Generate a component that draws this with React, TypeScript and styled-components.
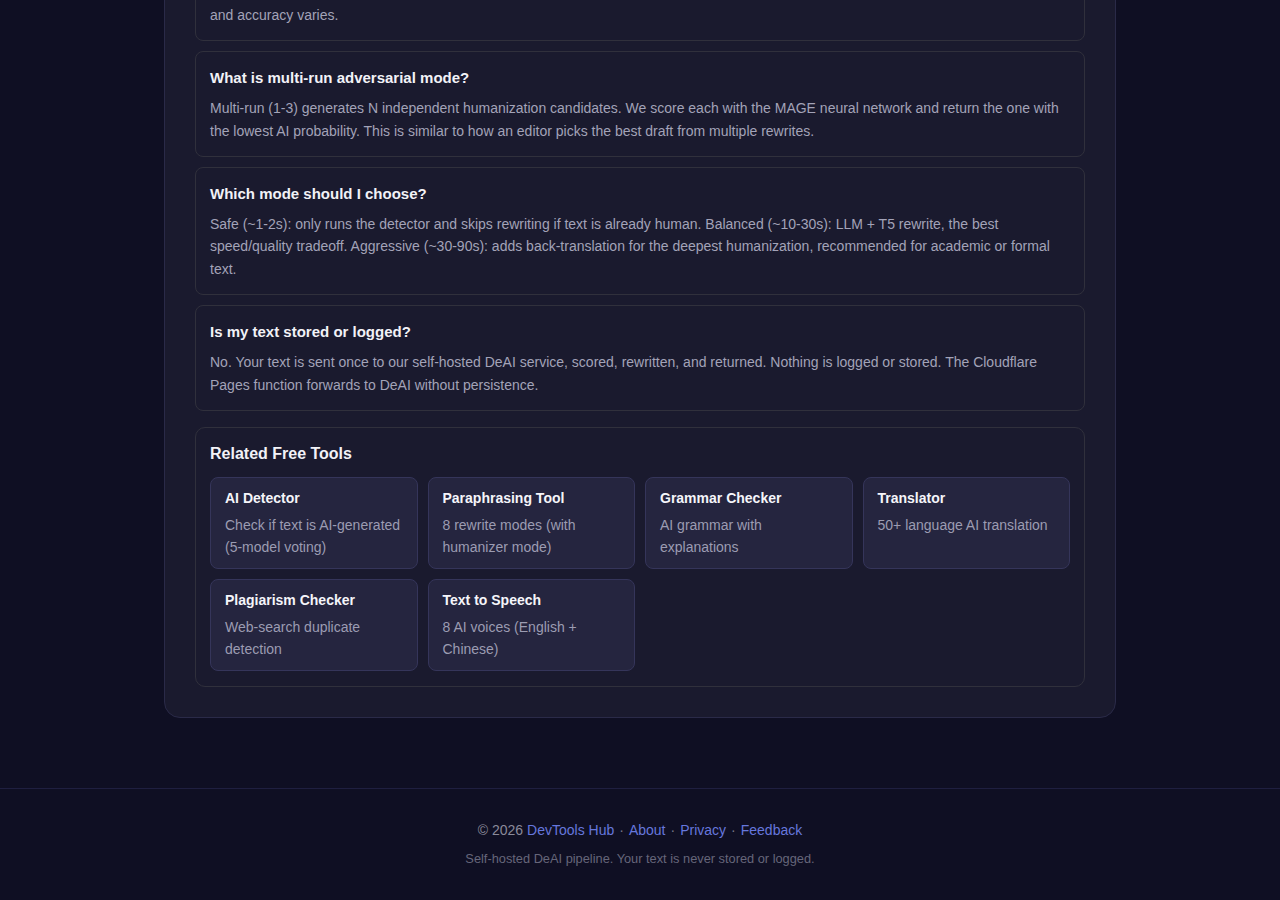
import React from 'react';
import styled, { createGlobalStyle } from 'styled-components';

const faqs = [
  {
    q: 'How accurate is the humanizer?',
    a: 'Results depend on the input length, style and which detector is used to check the output. No tool can guarantee a pass on every detector, and accuracy varies.',
  },
  {
    q: 'What is multi-run adversarial mode?',
    a: 'Multi-run (1-3) generates N independent humanization candidates. We score each with the MAGE neural network and return the one with the lowest AI probability. This is similar to how an editor picks the best draft from multiple rewrites.',
  },
  {
    q: 'Which mode should I choose?',
    a: 'Safe (~1-2s): only runs the detector and skips rewriting if text is already human. Balanced (~10-30s): LLM + T5 rewrite, the best speed/quality tradeoff. Aggressive (~30-90s): adds back-translation for the deepest humanization, recommended for academic or formal text.',
  },
  {
    q: 'Is my text stored or logged?',
    a: 'No. Your text is sent once to our self-hosted DeAI service, scored, rewritten, and returned. Nothing is logged or stored. The Cloudflare Pages function forwards to DeAI without persistence.',
  },
];

const tools = [
  { name: 'AI Detector', desc: 'Check if text is AI-generated (5-model voting)' },
  { name: 'Paraphrasing Tool', desc: '8 rewrite modes (with humanizer mode)' },
  { name: 'Grammar Checker', desc: 'AI grammar with explanations' },
  { name: 'Translator', desc: '50+ language AI translation' },
  { name: 'Plagiarism Checker', desc: 'Web-search duplicate detection' },
  { name: 'Text to Speech', desc: '8 AI voices (English + Chinese)' },
];

const App = () => {
  return (
    <Page>
      <GlobalStyle />
      <Main>
        <Panel>
          {faqs.map((f) => (
            <FaqCard key={f.q}>
              <FaqQuestion>{f.q}</FaqQuestion>
              <FaqAnswer>{f.a}</FaqAnswer>
            </FaqCard>
          ))}

          <Related>
            <RelatedTitle>Related Free Tools</RelatedTitle>
            <ToolGrid>
              {tools.map((t) => (
                <ToolCard key={t.name} href="#">
                  <ToolName>{t.name}</ToolName>
                  <ToolDesc>{t.desc}</ToolDesc>
                </ToolCard>
              ))}
            </ToolGrid>
          </Related>
        </Panel>
      </Main>

      <Footer>
        <FooterLine>
          © 2026 <FooterLink href="#">DevTools Hub</FooterLink>
          <Dot>·</Dot>
          <FooterLink href="#">About</FooterLink>
          <Dot>·</Dot>
          <FooterLink href="#">Privacy</FooterLink>
          <Dot>·</Dot>
          <FooterLink href="#">Feedback</FooterLink>
        </FooterLine>
        <FooterNote>Self-hosted DeAI pipeline. Your text is never stored or logged.</FooterNote>
      </Footer>
    </Page>
  );
};

const GlobalStyle = createGlobalStyle`
  html, body {
    margin: 0;
    padding: 0;
    background: #0f0f23;
    overflow: hidden;
  }
  * {
    box-sizing: border-box;
  }
  body {
    font-family: "Liberation Sans", Arial, sans-serif;
    color: #e8e8f0;
  }
`;

// the page is shown scrolled to its end, so the column is anchored to the bottom
const Page = styled.div`
  height: 900px;
  overflow: hidden;
  display: flex;
  flex-direction: column;
  justify-content: flex-end;
  background: #0f0f23;
`;

const Main = styled.main`
  padding: 0 164px 70px;
`;

const Panel = styled.section`
  background: #1a1a2e;
  border: 1px solid #2a2a48;
  border-radius: 16px;
  padding: 30px;
  display: flex;
  flex-direction: column;
  gap: 10px;
`;

const FaqCard = styled.div`
  border: 1px solid #30303c;
  border-radius: 8px;
  padding: 16px 14px 14px;
`;

const FaqQuestion = styled.h3`
  margin: 0 0 9px;
  font-size: 15px;
  line-height: 20px;
  font-weight: 700;
  color: #f2f2f7;
`;

const FaqAnswer = styled.p`
  margin: 0;
  font-size: 14px;
  line-height: 22.4px;
  color: #a3a3b8;
`;

const Related = styled.div`
  margin-top: 6px;
  border: 1px solid #30303c;
  border-radius: 10px;
  padding: 15px 14px;
`;

const RelatedTitle = styled.h2`
  margin: 0 0 12px;
  font-size: 16px;
  line-height: 22px;
  font-weight: 700;
  color: #f2f2f7;
`;

const ToolGrid = styled.div`
  display: grid;
  grid-template-columns: repeat(4, 1fr);
  gap: 10px;
`;

const ToolCard = styled.a`
  display: block;
  text-decoration: none;
  background: #25253f;
  border: 1px solid #35355a;
  border-radius: 8px;
  padding: 12px 14px 10px;
`;

const ToolName = styled.div`
  font-size: 14px;
  line-height: 17px;
  font-weight: 700;
  color: #f5f5fa;
  margin-bottom: 7px;
`;

const ToolDesc = styled.div`
  font-size: 14px;
  line-height: 22px;
  color: #9c9cb2;
`;

const Footer = styled.footer`
  border-top: 1px solid #1f1f40;
  padding: 31px 20px 32px;
  text-align: center;
`;

const FooterLine = styled.div`
  font-size: 14px;
  line-height: 20px;
  color: #8a8a9a;
`;

const FooterLink = styled.a`
  color: #6677dd;
  text-decoration: none;
`;

const Dot = styled.span`
  margin: 0 5px;
  color: #777788;
`;

const FooterNote = styled.div`
  margin-top: 10px;
  font-size: 12.8px;
  line-height: 18px;
  color: #66667a;
`;

export default App;
